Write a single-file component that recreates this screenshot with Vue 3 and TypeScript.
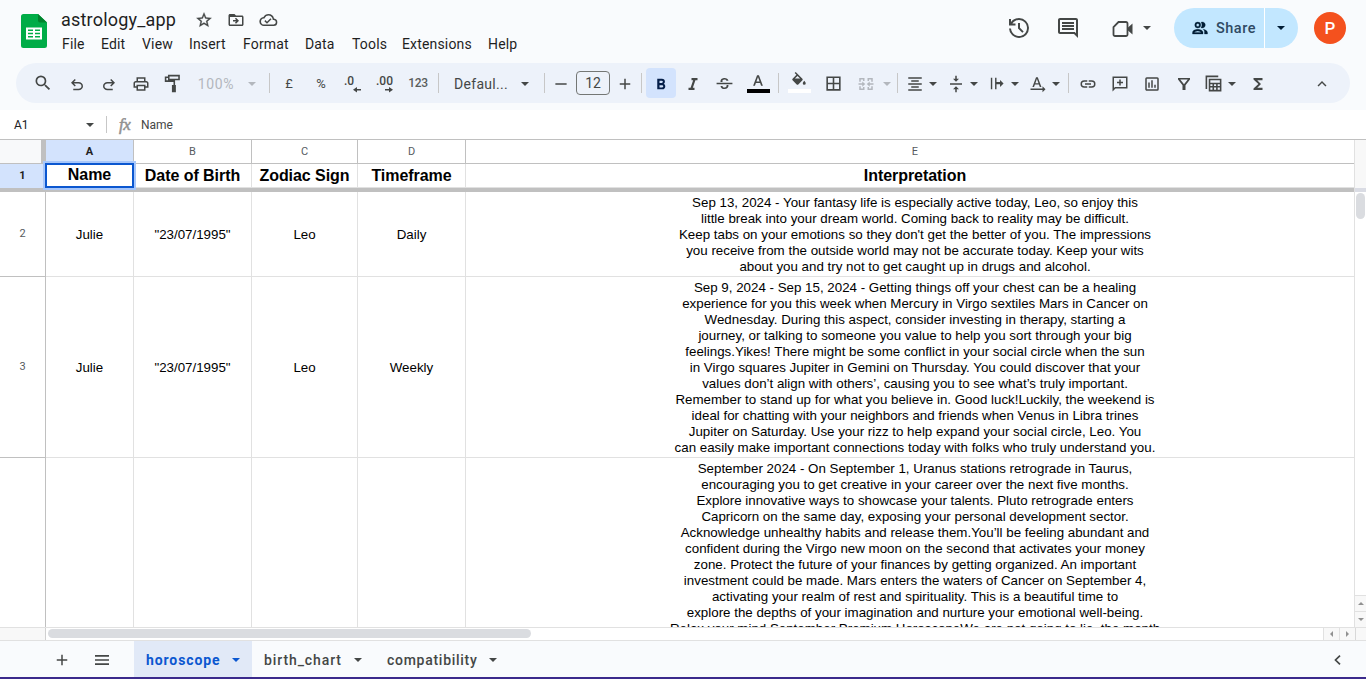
<script setup lang="ts">
interface Tool { id: string; gap: number; w: number; kind: 'icon' | 'arrow' | 'sep' | 'text' | 'box'; label?: string; d?: string; size?: number; cls?: string; vb?: string }

const menus = [
  { t: 'File', w: 39 }, { t: 'Edit', w: 41 }, { t: 'View', w: 47 }, { t: 'Insert', w: 54 }, { t: 'Format', w: 62 },
  { t: 'Data', w: 47 }, { t: 'Tools', w: 50 }, { t: 'Extensions', w: 86 }, { t: 'Help', w: 46 },
]

const arrow = (id: string, gap: number, cls = ''): Tool => ({ id, gap, w: 10, kind: 'arrow', cls })
const sep = (id: string, gap: number): Tool => ({ id, gap, w: 1, kind: 'sep' })
const icon = (id: string, gap: number, w: number, d: string, size = 18, cls = '', vb = '0 0 24 24'): Tool => ({ id, gap, w, kind: 'icon', d, size, cls, vb })

const tools: Tool[] = [
  icon('search', 11, 32, 'M15.5 14h-.79l-.28-.27A6.47 6.47 0 0 0 16 9.5 6.5 6.5 0 1 0 9.5 16c1.61 0 3.09-.59 4.23-1.57l.27.28v.79l5 4.99L20.49 19l-4.99-5zm-6 0C7.01 14 5 11.99 5 9.5S7.01 5 9.5 5 14 7.01 14 9.5 11.99 14 9.5 14z', 20),
  icon('undo', 2, 32, 'M7 19v-2h7.1q1.58 0 2.74-1 1.16-1 1.16-2.5t-1.16-2.5Q15.68 10 14.1 10H7.8l2.6 2.6L9 14 4 9l5-5 1.4 1.4L7.8 8h6.3q2.43 0 4.16 1.58Q20 11.15 20 13.5t-1.74 3.93Q16.53 19 14.1 19z', 18, 'low'),
  icon('redo', 0, 32, 'M9.9 19q-2.43 0-4.16-1.57Q4 15.85 4 13.5t1.74-3.92Q7.47 8 9.9 8h6.3l-2.6-2.6L15 4l5 5-5 5-1.4-1.4 2.6-2.6H9.9q-1.58 0-2.74 1Q6 12 6 13.5T7.16 16q1.16 1 2.74 1H17v2z', 18, 'low'),
  icon('print', 0, 32, 'M19 8h-1V3H6v5H5c-1.66 0-3 1.34-3 3v6h4v4h12v-4h4v-6c0-1.66-1.34-3-3-3zM8 5h8v3H8V5zm8 14H8v-4h8v4zm2-4v-2H6v2H4v-4c0-.55.45-1 1-1h14c.55 0 1 .45 1 1v4h-2z'),
  icon('paint', 0, 32, 'M18 1H5v2H1v7h11v4h-2v9h5v-9h-1V8H3V5h2v3h15V1zm0 5H7V3h11z', 19),
  { id: 'zoom', gap: 0, w: 54, kind: 'text', label: '100%', cls: 'zoomtxt' },
  arrow('zoom-a', 4, 'dim'), sep('s1', 12),
  { id: 'gbp', gap: 7, w: 24, kind: 'text', label: '£', cls: 'sym' },
  { id: 'pct', gap: 4, w: 32, kind: 'text', label: '%', cls: 'sym' },
  { id: 'dec', gap: 7, w: 20, kind: 'icon', cls: 'decimals' },
  { id: 'inc', gap: 12, w: 21, kind: 'icon', cls: 'decimals' },
  { id: 'fmt', gap: 9, w: 24, kind: 'text', label: '123', cls: 'fmt' },
  sep('s2', 8),
  { id: 'font', gap: 15, w: 58, kind: 'text', label: 'Defaul...', cls: 'fonttxt' },
  arrow('font-a', 8), sep('s3', 14),
  icon('minus', 6, 20, 'M4.500 11h15v2h-15z'),
  { id: 'size', gap: 5, w: 34, kind: 'box', label: '12' },
  icon('plus', 5, 20, 'M19 13h-6v6h-2v-6H5v-2h6V5h2v6h6z'),
  sep('s4', 6),
  icon('bold', 4, 30, 'M15.6 11.8c1-.7 1.6-1.8 1.6-2.8a4 4 0 0 0-4-4H7v14h7c2.1 0 3.7-1.7 3.7-3.8 0-1.500-.8-2.800-2.100-3.400zM10 7.500h3a1.500 1.500 0 1 1 0 3h-3zm3.500 9H10v-3h3.500a1.500 1.500 0 1 1 0 3z', 18, 'active'),
  icon('italic', 2, 30, 'M10 4v3h2.210l-3.420 10H6v3h8v-3h-2.210l3.420-10H18V4z', 18),
  icon('strike', 1, 30, 'M2 11h20v2H2zM7 10c-.5-4 3-5 5-5 2.500 0 4.500 1.200 5 3.500h-2.500C14 7.400 13.200 7 12 7c-2 0-3 1-2.500 3zM7 15h2.400c.3 1.500 1.400 2 2.600 2 2 0 3-1 2.600-3H17c.4 3.500-2 5-5 5s-4.800-1.500-5-4z', 19),
  { id: 'color', gap: 5, w: 28, kind: 'icon', cls: 'swatch black', d: 'M5.490 17h2.420l1.270-3.580h5.650L16.090 17h2.420L13.250 3h-2.500zm4.420-5.610 2.030-5.790h.12l2.030 5.790z', size: 18, vb: '0 0 24 24' },
  sep('s5', 6),
  { id: 'fill', gap: 6, w: 28, kind: 'icon', cls: 'swatch white', d: 'M16.560 8.940 7.620 0 6.210 1.410l2.380 2.380-5.150 5.150a1.490 1.490 0 0 0 0 2.120l5.500 5.500c.29.29.68.44 1.060.44s.77-.15 1.060-.44l5.500-5.500c.59-.58.59-1.530 0-2.120zM6.500 8.700 10 5.210 13.500 8.700zM19 11.500s-2 2.170-2 3.500a2 2 0 0 0 4 0c0-1.330-2-3.500-2-3.500z', size: 18, vb: '0 0 24 24' },
  icon('borders', 6, 28, 'M3 3v18h18V3zm8 16H5v-6h6zm0-8H5V5h6zm8 8h-6v-6h6zm0-8h-6V5h6z', 19),
  icon('merge', 5, 28, 'M3 4h7v4H8V6H5v3H3zm11 0h7v5h-2V6h-3v2h-2zM3 15h2v3h3v-2h2v4H3zm16 0h2v5h-7v-4h2v2h3zM2 11h5V8.500l4 3.500-4 3.500V13H2zm20 0v2h-5v2.500L13 12l4-3.500V11z', 18, 'dim'),
  arrow('merge-a', 2, 'dim'), sep('s6', 5),
  icon('align', 5, 24, 'M7 15v2h10v-2zm-4 6h18v-2H3zm0-8h18v-2H3zm4-6v2h10V7zM3 3v2h18V3z'),
  arrow('align-a', 1),
  icon('valign', 6, 24, 'M8 19h3v4h2v-4h3l-4-4zm8-14h-3V1h-2v4H8l4 4zM4 11v2h16v-2z', 18),
  arrow('valign-a', 1),
  icon('wrap', 5, 24, 'M4 4h2v16H4zm6 0h2v6h5V7l5 5-5 5v-4h-5v7h-2z', 17),
  arrow('wrap-a', 2),
  icon('rotate', 6, 24, 'M4.500 16h2.200l1.200-3.200h5.300l1.200 3.200h2.200L11.700 3H9.400zm4-5 2-5.700h.1l2 5.700zM2 18h16v-3l4 4-4 4v-3H2z', 18),
  arrow('rotate-a', 1), sep('s7', 7),
  icon('link', 7, 24, 'M3.900 12A3.100 3.100 0 0 1 7 8.900h4V7H7a5 5 0 0 0 0 10h4v-1.900H7A3.100 3.100 0 0 1 3.900 12zM8 13h8v-2H8zm9-6h-4v1.900h4a3.100 3.100 0 0 1 0 6.200h-4V17h4a5 5 0 0 0 0-10z', 18),
  icon('comment', 8, 24, 'M22 2H2v20l4-4h16zm-2 14H5.200L4 17.200V4h16zM11 14h2v-3h3V9h-3V6h-2v3H8v2h3z', 18),
  icon('chart', 8, 24, 'M19 3H5a2 2 0 0 0-2 2v14c0 1.100.9 2 2 2h14a2 2 0 0 0 2-2V5a2 2 0 0 0-2-2zm0 16H5V5h14zM7 10h2v7H7zm4-3h2v10h-2zm4 6h2v4h-2z', 18),
  icon('filter', 8, 24, 'M4 4h16v2l-6 7.500V20h-4v-6.500L4 6zm3 2 5 6.200L17 6z', 18),
  icon('views', 5, 24, 'M2 2h16v2H4v15H2zM6 6h16v16H6zm2 2v3h12V8zm0 5v2h2.700v-2zm4.700 0v2h2.600v-2zm4.600 0v2H20v-2zM8 17v3h2.700v-3zm4.700 0v3h2.600v-3zm4.600 0v3H20v-3z', 19),
  arrow('views-a', 2),
  icon('sum', 9, 24, 'M18 4H6v2l6.500 6L6 18v2h12v-3h-7l5-5-5-5h7z', 18),
  icon('collapse', 40, 24, 'm12 8-6 6 1.410 1.410L12 10.830l4.590 4.580L18 14z', 18),
]

const headings = [
  { c: 'A', h: 'Name' }, { c: 'B', h: 'Date of Birth' }, { c: 'C', h: 'Zodiac Sign' }, { c: 'D', h: 'Timeframe' }, { c: 'E', h: 'Interpretation' },
]

const rows = [
  { n: '2', cls: 'r2', cells: ['Julie', '"23/07/1995"', 'Leo', 'Daily'], lines: [
    'Sep 13, 2024 - Your fantasy life is especially active today, Leo, so enjoy this',
    'little break into your dream world. Coming back to reality may be difficult.',
    "Keep tabs on your emotions so they don't get the better of you. The impressions",
    'you receive from the outside world may not be accurate today. Keep your wits',
    'about you and try not to get caught up in drugs and alcohol.',
  ] },
  { n: '3', cls: 'r3', cells: ['Julie', '"23/07/1995"', 'Leo', 'Weekly'], lines: [
    'Sep 9, 2024 - Sep 15, 2024 - Getting things off your chest can be a healing',
    'experience for you this week when Mercury in Virgo sextiles Mars in Cancer on',
    'Wednesday. During this aspect, consider investing in therapy, starting a',
    'journey, or talking to someone you value to help you sort through your big',
    'feelings.Yikes! There might be some conflict in your social circle when the sun',
    'in Virgo squares Jupiter in Gemini on Thursday. You could discover that your',
    'values don’t align with others’, causing you to see what’s truly important.',
    'Remember to stand up for what you believe in. Good luck!Luckily, the weekend is',
    'ideal for chatting with your neighbors and friends when Venus in Libra trines',
    'Jupiter on Saturday. Use your rizz to help expand your social circle, Leo. You',
    'can easily make important connections today with folks who truly understand you.',
  ] },
  { n: '', cls: 'r4', cells: ['', '', '', ''], lines: [
    'September 2024 - On September 1, Uranus stations retrograde in Taurus,',
    'encouraging you to get creative in your career over the next five months.',
    'Explore innovative ways to showcase your talents. Pluto retrograde enters',
    'Capricorn on the same day, exposing your personal development sector.',
    'Acknowledge unhealthy habits and release them.You’ll be feeling abundant and',
    'confident during the Virgo new moon on the second that activates your money',
    'zone. Protect the future of your finances by getting organized. An important',
    'investment could be made. Mars enters the waters of Cancer on September 4,',
    'activating your realm of rest and spirituality. This is a beautiful time to',
    'explore the depths of your imagination and nurture your emotional well-being.',
    'Relax your mind.September Premium HoroscopeWe are not going to lie, the month',
  ] },
]
</script>

<template>
  <div class="app">
    <header class="top">
      <svg class="logo" width="26" height="34" viewBox="0 0 26 34">
        <path d="M2.500 0H17l9 8.500V31.500a2.500 2.500 0 0 1-2.500 2.500h-21A2.500 2.500 0 0 1 0 31.500v-29A2.500 2.500 0 0 1 2.500 0z" fill="#00ac47" />
        <path d="M17 0l9 8.500h-7A2 2 0 0 1 17 6.500z" fill="#00832d" />
        <path d="M5 13.500h16v12H5zm2 2v1.500h5v-1.500zm7 0v1.500h5v-1.500zM7 18.800v1.500h5v-1.500zm7 0v1.500h5v-1.500zM7 22v1.500h5V22zm7 0v1.500h5V22z" fill="#fff" fill-rule="evenodd" />
      </svg>
      <div class="titles">
        <div class="title-row">
          <span class="title">astrology_app</span>
          <svg class="t1" width="18" height="18" viewBox="0 0 24 24"><path d="m22 9.240-7.190-.62L12 2 9.190 8.630 2 9.240l5.460 4.730L5.820 21 12 17.270 18.180 21l-1.630-7.030zM12 15.400l-3.760 2.270 1-4.280-3.320-2.880 4.380-.38L12 6.100l1.710 4.040 4.380.38-3.320 2.880 1 4.280z" stroke="#444746" stroke-width=".4" /></svg>
          <svg class="t2" width="18" height="18" viewBox="0 0 24 24"><path d="M20 6h-8l-2-2H4c-1.100 0-2 .9-2 2v12c0 1.100.9 2 2 2h16c1.100 0 2-.9 2-2V8c0-1.100-.9-2-2-2zm0 12H4V8h16zm-8-1 4-4-4-4-1.400 1.400 1.600 1.600H8v2h4.200l-1.600 1.600z" /></svg>
          <svg class="t3" width="19" height="18" viewBox="0 0 24 24"><path d="M19.350 10.040A7.490 7.490 0 0 0 12 4C9.110 4 6.600 5.640 5.350 8.040A5.990 5.990 0 0 0 6 20h13a5 5 0 0 0 .35-9.960zM19 18H6a4 4 0 0 1-.44-7.970l1.070-.11.5-.95A5.470 5.470 0 0 1 12 6c2.620 0 4.880 1.860 5.390 4.430l.3 1.500 1.530.11A3 3 0 0 1 19 18zm-9-3.820-2.090-2.090L6.500 13.500 10 17l6.010-6.010-1.410-1.410z" /></svg>
        </div>
        <nav class="menu"><span v-for="m in menus" :key="m.t" :style="{ width: m.w + 'px' }">{{ m.t }}</span></nav>
      </div>
      <div class="actions">
        <svg class="history" width="24" height="24" viewBox="0 0 24 24"><path d="M12 2a10 10 0 0 0-8 4V3H2v6.500h6.500v-2H5.400A8 8 0 1 1 4 12.500H2A10 10 0 1 0 12 2zm-1 5v5.600l4.300 4.200 1.400-1.400L13 11.800V7z" /></svg>
        <svg class="notes" width="24" height="24" viewBox="0 0 24 24"><path d="M21.990 4c0-1.100-.89-2-1.990-2H4c-1.100 0-2 .9-2 2v12c0 1.100.9 2 2 2h14l4 4zM20 4v13.170L18.830 16H4V4zM6 12h12v2H6zm0-3h12v2H6zm0-3h12v2H6z" /></svg>
        <svg class="meet" width="22" height="18" viewBox="0 0 22 18"><path d="M6.500 2H14a1.500 1.500 0 0 1 1.500 1.500v11a1.500 1.500 0 0 1-1.500 1.500H3A1.500 1.500 0 0 1 1.500 14.500V7z" fill="none" stroke="#444746" stroke-width="1.800" /><path d="M16 7.500l4.500-4v11l-4.500-4z" /></svg>
        <svg class="meet-arrow" width="8" height="4" viewBox="0 0 8 4"><path d="M0 0h8L4 4z" /></svg>
        <div class="share">
          <div class="share-main">
            <svg width="18" height="18" viewBox="0 0 24 24"><path d="M9 13.750c-2.800 0-7 1.400-7 4.250v2h14v-2c0-2.850-4.200-4.250-7-4.250zM4.340 18c.8-.7 2.600-2 4.660-2s3.900 1.300 4.660 2zM9 12a4 4 0 1 0 0-8 4 4 0 0 0 0 8zm0-6a2 2 0 1 1 0 4 2 2 0 0 1 0-4zm7.040 7.810C17.200 14.650 18 15.700 18 17.200V20h4v-2c0-2.400-3.500-3.900-5.960-4.190zM15 12a4 4 0 1 0-1.700-7.600 6 6 0 0 1 0 7.200c.5.300 1.100.4 1.700.4z" stroke="#001d35" stroke-width=".4" /></svg>
            <span>Share</span>
          </div>
          <div class="share-more"><svg width="8" height="4" viewBox="0 0 8 4"><path d="M0 0h8L4 4z" /></svg></div>
        </div>
        <div class="avatar">P</div>
      </div>
    </header>

    <div class="toolbar">
      <div v-for="t in tools" :key="t.id" class="tool" :class="[t.kind, t.cls, t.id]" :style="{ width: t.w + 'px', marginLeft: t.gap + 'px' }">
        <template v-if="t.kind === 'text' || t.kind === 'box'">{{ t.label }}</template>
        <svg v-else-if="t.kind === 'arrow'" width="8" height="4" viewBox="0 0 8 4"><path d="M0 0h8L4 4z" /></svg>
        <template v-else-if="t.cls === 'decimals'">
          <span>{{ t.id === 'dec' ? '.0' : '.00' }}</span>
          <svg width="8" height="6" viewBox="0 0 8 6"><path :d="t.id === 'dec' ? 'M4 0v2h4v1.500H4v2L0 2.750z' : 'M4 0v2H0v1.500h4v2l4-2.750z'" /></svg>
        </template>
        <svg v-else-if="t.d" :width="t.size" :height="t.size" :viewBox="t.vb"><path :d="t.d" /></svg>
      </div>
    </div>

    <div class="formula">
      <span class="ref">A1</span>
      <svg width="8" height="4" viewBox="0 0 8 4"><path d="M0 0h8L4 4z" /></svg>
      <i class="bar"></i>
      <span class="fx">fx</span>
      <span class="val">Name</span>
    </div>

    <div class="body">
      <div class="sheet">
        <div class="row cols">
          <div class="num corner"></div>
          <div v-for="h in headings" :key="h.c" class="cell" :class="{ sel: h.c === 'A' }">{{ h.c }}</div>
        </div>
        <div class="row heads">
          <div class="num sel">1</div>
          <div v-for="h in headings" :key="h.c" class="cell" :class="{ current: h.c === 'A' }"><span>{{ h.h }}</span></div>
        </div>
        <div class="freeze"></div>
        <div v-for="r in rows" :key="r.cls" class="row data" :class="r.cls">
          <div class="num">{{ r.n }}</div>
          <div v-for="(c, i) in r.cells" :key="i" class="cell">{{ c }}</div>
          <div class="cell long"><div v-for="l in r.lines" :key="l" class="line">{{ l }}</div></div>
        </div>
      </div>
      <div class="vscroll">
        <div class="vtop"></div>
        <div class="vfreeze"></div>
        <div class="vthumb"></div>
        <div class="btn up"><svg width="6" height="3" viewBox="0 0 6 3"><path d="M0 3h6L3 0z" /></svg></div>
        <div class="btn down"><svg width="6" height="3" viewBox="0 0 6 3"><path d="M0 0h6L3 3z" /></svg></div>
      </div>
    </div>
    <div class="hscroll">
      <div class="hleft"></div>
      <div class="hthumb"></div>
      <div class="hbtn"><svg width="3" height="6" viewBox="0 0 3 6"><path d="M3 0v6L0 3z" /></svg></div>
      <div class="hbtn"><svg width="3" height="6" viewBox="0 0 3 6"><path d="M0 0v6l3-3z" /></svg></div>
      <div class="hend"></div>
    </div>

    <footer class="tabs">
      <svg class="add" width="18" height="18" viewBox="0 0 24 24"><path d="M19 13h-6v6h-2v-6H5v-2h6V5h2v6h6z" /></svg>
      <svg class="list" width="14" height="10" viewBox="0 0 14 10"><path d="M0 0h14v1.700H0zm0 4.150h14v1.700H0zm0 4.150h14V10H0z" /></svg>
      <div class="tab on"><span>horoscope</span><svg width="8" height="4" viewBox="0 0 8 4"><path d="M0 0h8L4 4z" /></svg></div>
      <div class="tab two"><span>birth_chart</span><svg width="8" height="4" viewBox="0 0 8 4"><path d="M0 0h8L4 4z" /></svg></div>
      <div class="tab three"><span>compatibility</span><svg width="8" height="4" viewBox="0 0 8 4"><path d="M0 0h8L4 4z" /></svg></div>
      <svg class="side" width="7" height="10" viewBox="0 0 7 10"><path d="M6 .7 1.500 5 6 9.300" fill="none" stroke="#444746" stroke-width="1.700" /></svg>
    </footer>
  </div>
</template>

<style>
body { margin: 0; overflow: hidden; }
</style>
<style scoped>
* { box-sizing: border-box; }
.app { width: 1366px; height: 679px; display: flex; flex-direction: column; background: #f9fbfd; font-family: Roboto, "Liberation Sans", sans-serif; color: #1f1f1f; overflow: hidden; border-bottom: 2px solid #3b2a8c; }
svg { display: block; fill: #444746; flex: none; }
.top { height: 63px; display: flex; flex: none; }
.logo { margin: 14px 0 0 21px; }
.titles { margin-left: 14px; padding-top: 8px; }
.title-row { display: flex; height: 24px; align-items: center; }
.title { font-size: 18px; line-height: 24px; width: 115px; letter-spacing: .2px; white-space: nowrap; }
.t1 { margin-left: 19px; }
.t2 { margin-left: 14px; }
.t3 { margin-left: 14px; }
.menu { display: flex; font-size: 14px; line-height: 20px; padding: 2px 0 0 1px; letter-spacing: .16px; }
.menu span { white-space: nowrap; }
.actions { display: flex; align-items: center; height: 56px; margin-left: auto; padding-right: 20px; }
.notes { margin-left: 25px; }
.meet { margin: 2px 0 0 32px; }
.meet-arrow { margin-left: 9px; }
.share { display: flex; width: 124px; height: 40px; margin-left: 23px; border-radius: 20px; overflow: hidden; background: #c2e7ff; }
.share svg { fill: #001d35; }
.share-main { width: 91px; border-right: 1px solid #fff; display: flex; align-items: center; padding-left: 17px; font-size: 14.500px; font-weight: 500; color: #2f4a63; }
.share-main span { margin-left: 7px; letter-spacing: .5px; }
.share-more { flex: 1; display: flex; align-items: center; padding-left: 12px; }
.avatar { width: 32px; height: 32px; margin-left: 16px; border-radius: 50%; background: #f4511e; color: #fff; font-size: 17px; font-weight: 500; display: flex; align-items: center; justify-content: center; }

.toolbar { width: 1334px; height: 40px; margin-left: 16px; border-radius: 20px; background: #edf2fa; display: flex; align-items: center; flex: none; }
.tool { flex: none; display: flex; align-items: center; justify-content: center; height: 30px; color: #444746; white-space: nowrap; padding-top: 1px; }
.sep { height: 20px; background: #c7c7c7; }
.dim svg { fill: #b3b7bd; }
.zoomtxt { color: #b3b7bd; font-size: 14px; letter-spacing: .6px; }
.sym { font-size: 13px; padding-bottom: 1px; }
.fmt { font-size: 12px; font-weight: 500; letter-spacing: -.4px; color: #5a5d5c; padding-bottom: 1px; }
.fonttxt { font-size: 14px; letter-spacing: .3px; justify-content: flex-start; }
.box { height: 24px; border: 1px solid #747775; border-radius: 4px; font-size: 14px; padding: 0; }
.active { background: #d3e3fd; border-radius: 4px; }
.active svg { fill: #041e49; }
.search { padding-top: 0; }
.low { padding-top: 4px; }
.decimals { flex-direction: column; align-items: stretch; justify-content: flex-start; font-size: 12px; font-weight: 500; line-height: 14px; padding-top: 6px; }
.decimals svg { margin-top: -1px; }
.dec svg { margin-left: 9px; }
.inc svg { margin-left: 9px; }
.swatch { flex-direction: column; justify-content: flex-end; padding: 0 0 5px; }
.swatch::after { content: ""; width: 23px; height: 4px; background: #000; }
.swatch svg { margin-bottom: -2px; }
.swatch.white::after { background: #fff; }
.swatch.white svg { margin-bottom: -1px; }

.formula { height: 29px; margin-top: 7px; background: #fff; display: flex; align-items: center; flex: none; font-size: 12px; color: #444746; }
.ref { width: 72px; margin-left: 14px; font-size: 12px; color: #202124; }
.bar { width: 1px; height: 17px; margin-left: 12px; background: #c7c7c7; }
.fx { margin-left: 12px; width: 22px; font: italic 400 17px "Liberation Serif", serif; letter-spacing: -.5px; color: #919191; -webkit-text-stroke: .5px #919191; }
.val { letter-spacing: -.05px; font-size: 12px; }

.body { display: flex; height: 488px; flex: none; background: #fff; border-top: 1px solid #c0c0c0; }
.sheet { width: 1354px; height: 487px; overflow: hidden; flex: none; }
.row { display: grid; grid-template-columns: 46px 88px 118px 106px 108px 1fr; }
.cell { display: flex; align-items: center; justify-content: center; border-right: 1px solid #e1e1e1; border-bottom: 1px solid #e1e1e1; }
.cell:last-child { border-right: 0; padding-left: 10px; }
.num { display: flex; align-items: center; justify-content: center; border-right: 1px solid #c0c0c0; border-bottom: 1px solid #c0c0c0; font-size: 11px; color: #575b5f; }
.cols { height: 24px; font-size: 11px; color: #575b5f; }
.cols .cell { border-color: #c0c0c0; }
.corner { background: #f8f9fa; border-right: 5px solid #c0c0c0; border-bottom-color: #c0c0c0; }
.sel { background: #d3e3fd; color: #1f1f1f; font-weight: 700; }
.heads { height: 24px; font: bold 16px "Liberation Sans", Arial, sans-serif; color: #000; }
.heads .num { font: bold 11px Roboto, sans-serif; border-bottom: 0; padding-bottom: 1px; }
.heads .cell { border-bottom-color: #e1e1e1; letter-spacing: -.05px; }
.heads .current { border: 0; outline: 2px solid #0b57d0; outline-offset: -2px; box-shadow: 0 0 0 2px #a8c7fa; margin: -1px 0 0 -1px; height: 25px; padding-bottom: 1px; position: relative; z-index: 2; }
.freeze { height: 4px; background: #c0c0c0; }
.data { font: 13.333px "Liberation Sans", Arial, sans-serif; color: #000; }
.data .num { font: 11px Roboto, sans-serif; padding-bottom: 2px; }
.r2 { height: 85px; }
.r3 { height: 181px; }
.r4 { height: 182px; }
.cell.long { display: block; padding-top: 3px; text-align: center; }
.line { line-height: 16px; height: 16px; white-space: nowrap; }
.vscroll { width: 12px; border-left: 1px solid #e1e1e1; display: flex; flex-direction: column; flex: none; }
.vtop { height: 48px; background: #f8f8f8; }
.vfreeze { height: 4px; background: #dadce4; }
.vthumb { width: 9px; height: 26px; margin: 1px 0 0 1px; border-radius: 5px; background: #dadce0; }
.btn { height: 16px; border-top: 1px solid #e1e1e1; background: #f8f8f8; display: flex; align-items: center; justify-content: center; }
.btn svg, .hbtn svg { fill: #919191; }
.up { margin-top: auto; }
.hscroll { height: 14px; flex: none; display: flex; background: #fff; border-top: 1px solid #e1e1e1; border-bottom: 1px solid #e1e1e1; }
.hleft { width: 46px; background: #f8f8f8; border-right: 1px solid #d0d0d0; }
.hthumb { width: 483px; height: 9px; margin: 1px auto 0 2px; border-radius: 5px; background: #dadce0; }
.hbtn { width: 16px; border-left: 1px solid #e1e1e1; background: #f8f8f8; display: flex; align-items: center; justify-content: center; }
.hend { width: 11px; border-left: 1px solid #d8d8d8; background: #f8f8f8; }

.tabs { flex: 1; display: flex; align-items: center; background: #f9fbfd; font-size: 14px; font-weight: 500; color: #444746; }
.add { margin: 2px 0 0 53px; }
.list { margin: 2px 0 0 24px; }
.tab { height: 100%; display: flex; align-items: center; padding-top: 2px; }
.tab span { letter-spacing: .9px; white-space: nowrap; }
.on { margin-left: 25px; width: 118px; padding-left: 12px; background: #e1e9f7; color: #0b57d0; }
.on span { font-weight: 700; width: 86px; }
.on svg { fill: #0b57d0; }
.two { padding-left: 12px; }
.two span { width: 90px; }
.three { padding-left: 25px; }
.three span { width: 102px; letter-spacing: .72px; }
.side { margin: 2px 25px 0 auto; }
</style>
